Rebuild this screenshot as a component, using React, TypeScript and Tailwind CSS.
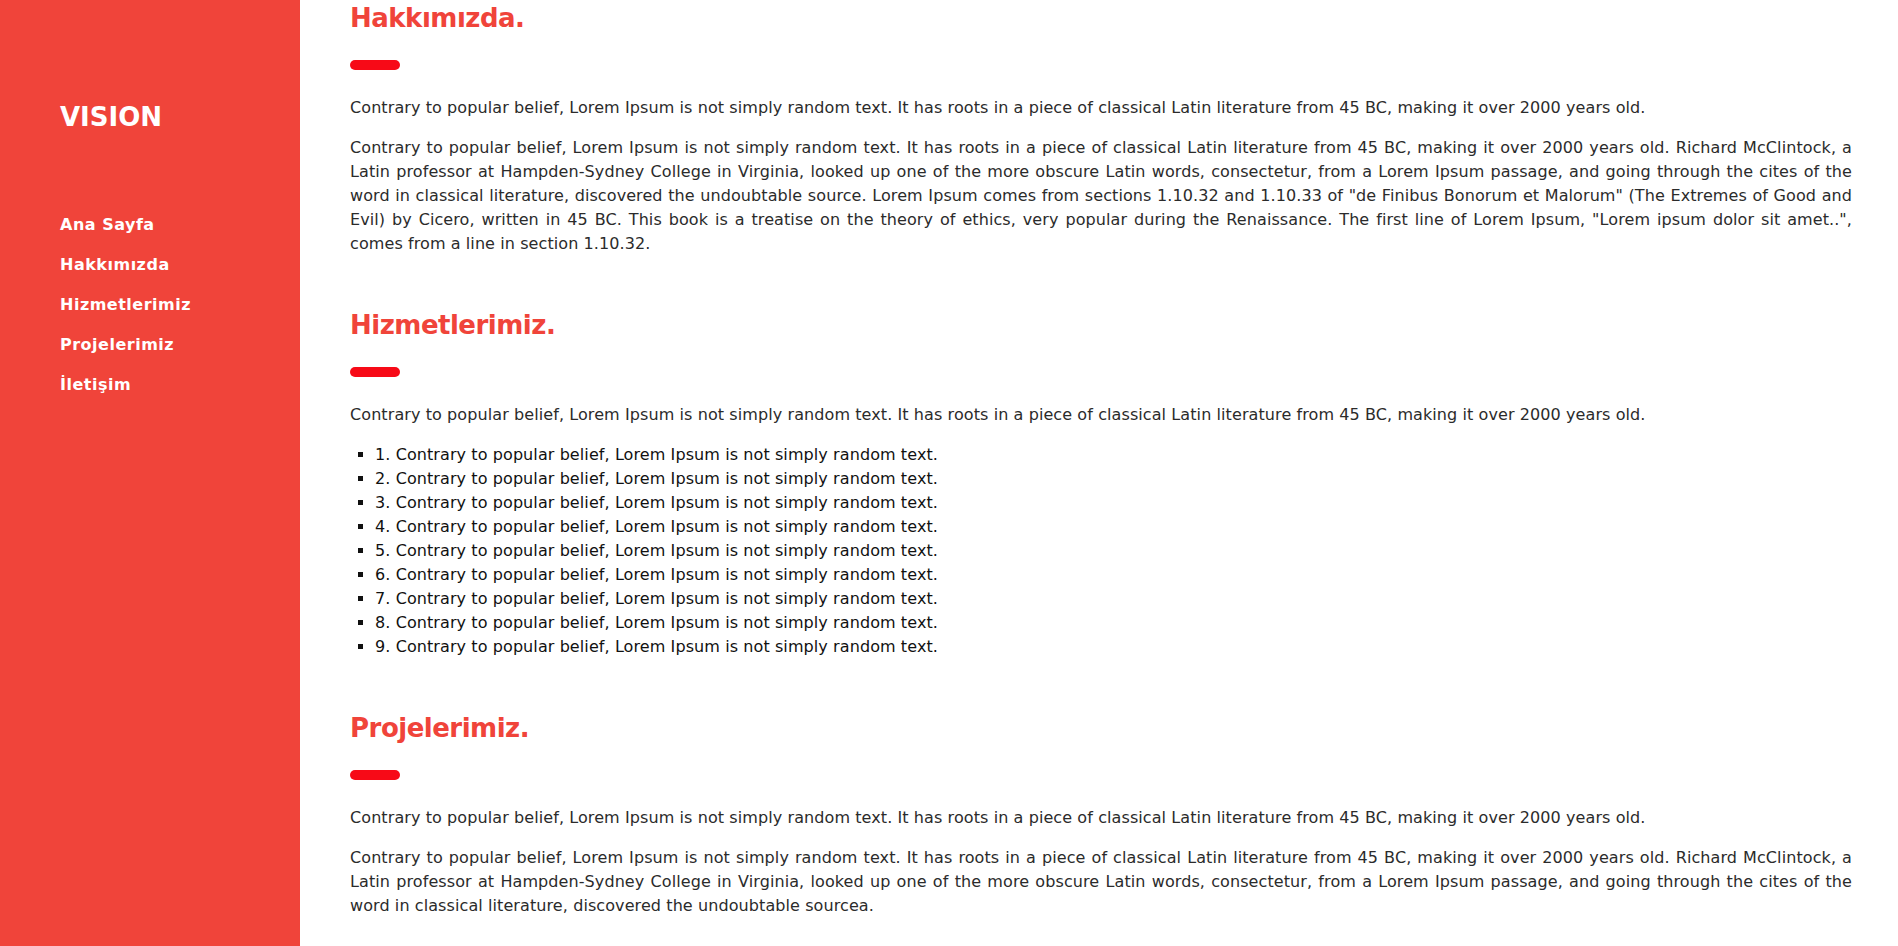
const navItems = ['Ana Sayfa', 'Hakkımızda', 'Hizmetlerimiz', 'Projelerimiz', 'İletişim']

const shortText =
  'Contrary to popular belief, Lorem Ipsum is not simply random text. It has roots in a piece of classical Latin literature from 45 BC, making it over 2000 years old.'

const longText =
  'Contrary to popular belief, Lorem Ipsum is not simply random text. It has roots in a piece of classical Latin literature from 45 BC, making it over 2000 years old. Richard McClintock, a Latin professor at Hampden-Sydney College in Virginia, looked up one of the more obscure Latin words, consectetur, from a Lorem Ipsum passage, and going through the cites of the word in classical literature, discovered the undoubtable source. Lorem Ipsum comes from sections 1.10.32 and 1.10.33 of "de Finibus Bonorum et Malorum" (The Extremes of Good and Evil) by Cicero, written in 45 BC. This book is a treatise on the theory of ethics, very popular during the Renaissance. The first line of Lorem Ipsum, "Lorem ipsum dolor sit amet..", comes from a line in section 1.10.32.'

const projectText =
  'Contrary to popular belief, Lorem Ipsum is not simply random text. It has roots in a piece of classical Latin literature from 45 BC, making it over 2000 years old. Richard McClintock, a Latin professor at Hampden-Sydney College in Virginia, looked up one of the more obscure Latin words, consectetur, from a Lorem Ipsum passage, and going through the cites of the word in classical literature, discovered the undoubtable sourcea.'

type SectionProps = {
  title: string
  children: React.ReactNode
}

function Section({ title, children }: SectionProps) {
  return (
    <section className="flex flex-col">
      <h2 className="text-[26px] leading-[32px] font-bold tracking-[-0.5px] text-[#f0443a]">
        {title}
      </h2>
      <span className="mt-[26px] block h-[10px] w-[50px] rounded-full bg-[#f70a17]" />
      <div className="mt-[26px] flex flex-col gap-4">{children}</div>
    </section>
  )
}

export default function App() {
  return (
    <div
      className="flex h-screen overflow-hidden bg-white"
      style={{ fontFamily: '"DejaVu Sans", Verdana, sans-serif' }}
    >
      <aside className="w-[300px] shrink-0 bg-[#f0443a] px-[60px] pt-[101px] text-white">
        <h1 className="text-[26px] leading-[32px] font-bold">VISION</h1>
        <nav className="mt-[80px] flex flex-col gap-4">
          {navItems.map((item) => (
            <a
              key={item}
              href="#"
              className="text-[16px] leading-[24px] font-bold tracking-[0.5px] text-white"
            >
              {item}
            </a>
          ))}
        </nav>
      </aside>

      <main className="flex flex-1 flex-col gap-[53px] pt-[2px] pr-[46px] pl-[50px] text-[16px] leading-[24px] tracking-[0.09px] text-[#2b2b2b]">
        <Section title="Hakkımızda.">
          <p>{shortText}</p>
          <p className="text-justify">{longText}</p>
        </Section>

        <Section title="Hizmetlerimiz.">
          <p>{shortText}</p>
          <ul className="list-[square] pl-[25px] text-[#111]">
            {[1, 2, 3, 4, 5, 6, 7, 8, 9].map((n) => (
              <li key={n}>
                {n}. Contrary to popular belief, Lorem Ipsum is not simply random text.
              </li>
            ))}
          </ul>
        </Section>

        <Section title="Projelerimiz.">
          <p>{shortText}</p>
          <p className="text-justify">{projectText}</p>
        </Section>
      </main>
    </div>
  )
}
